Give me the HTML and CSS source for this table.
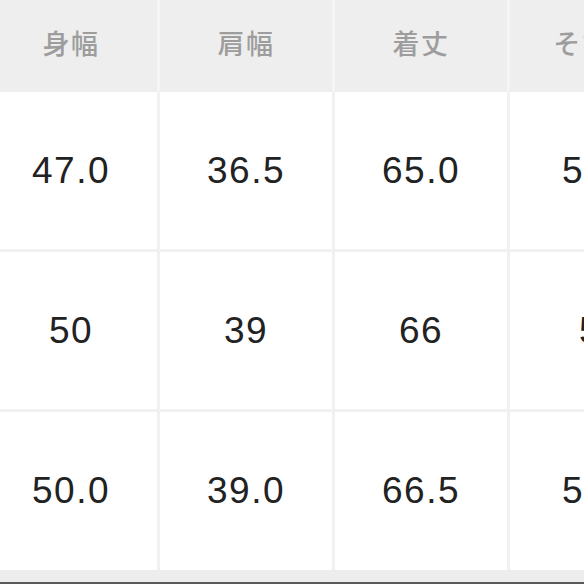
FILE: index.html
```html
<!DOCTYPE html>
<html lang="ja">
<head>
<meta charset="utf-8">
<link rel="stylesheet" href="styles.css">
</head>
<body>
<div class="sheet">
  <div class="table">
    <div class="cell head">身幅</div>
    <div class="cell head">肩幅</div>
    <div class="cell head">着丈</div>
    <div class="cell head">そで丈</div>

    <div class="cell val">47.0</div>
    <div class="cell val">36.5</div>
    <div class="cell val">65.0</div>
    <div class="cell val last">58.0</div>

    <div class="cell val">50</div>
    <div class="cell val">39</div>
    <div class="cell val">66</div>
    <div class="cell val last">59</div>

    <div class="cell val">50.0</div>
    <div class="cell val">39.0</div>
    <div class="cell val">66.5</div>
    <div class="cell val last">59.0</div>
  </div>
  <div class="footer"></div>
</div>
</body>
</html>
```
FILE: styles.css
```css
html, body {
  margin: 0;
  padding: 0;
  background: #ffffff;
  overflow: hidden;
}
.sheet {
  width: 584px;
  height: 584px;
  overflow: hidden;
  display: flex;
  flex-direction: column;
}
.table {
  display: grid;
  grid-template-columns: repeat(4, 175px);
  grid-template-rows: 92px 160px 160px 158px;
  margin-left: -15px;
  width: 700px;
}
.cell {
  box-sizing: border-box;
  display: flex;
  align-items: center;
  justify-content: center;
}
.head {
  background: #eeeeee;
  border-right: 3px solid #f5f5f5;
  color: #9d9d9d;
  font-family: "Noto Sans CJK JP", "Noto Sans", sans-serif;
  font-size: 27px;
  font-weight: 500;
  letter-spacing: 1.5px;
  padding-bottom: 8px;
}
.val {
  background: #ffffff;
  border-right: 3px solid #f1f1f1;
  border-bottom: 3px solid #f1f1f1;
  color: #222222;
  font-family: "Liberation Sans", Arial, sans-serif;
  font-size: 37px;
  letter-spacing: 1.5px;
}
.val.last {
  padding-left: 10px;
}
.table .val:nth-last-child(-n+4) {
  border-bottom: none;
}
.footer {
  height: 12px;
  background: #ededed;
  border-bottom: 2px solid #5a5a5a;
  flex: none;
}
```
